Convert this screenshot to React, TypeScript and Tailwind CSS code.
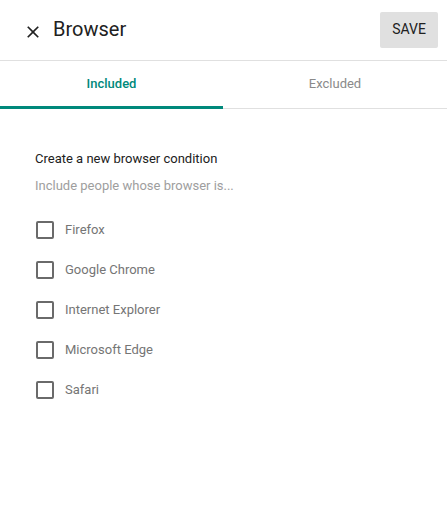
import React from "react";

const items = ["Firefox", "Google Chrome", "Internet Explorer", "Microsoft Edge", "Safari"];

export default function App() {
  return (
    <div className="w-[447px] h-[526px] bg-white text-[#212121]" style={{ fontFamily: "Roboto, 'Noto Sans', sans-serif" }}>
      <div className="h-[61px] border-b border-[#e0e0e0] flex items-center pl-[23px] pr-[9px]">
        <svg width="20" height="20" viewBox="0 0 24 24" className="shrink-0 mt-[3px]">
          <path d="M19 6.41L17.59 5 12 10.59 6.41 5 5 6.41 10.59 12 5 17.59 6.41 19 12 13.41 17.59 19 19 17.59 13.41 12z" fill="#212121" />
        </svg>
        <div className="ml-[10px] text-[20px] leading-none text-[#212121] mt-[-2px]">Browser</div>
        <div className="flex-1" />
        <div className="w-[58px] h-[36px] bg-[#e0e0e0] rounded-[2px] flex items-center justify-center text-[14px] font-normal text-[#212121] mt-[-1px]">SAVE</div>
      </div>
      <div className="flex h-[48px] border-b border-[#e0e0e0]">
        <div className="w-[223px] flex items-center justify-center text-[13px] font-medium text-[#00897b] border-b-[3px] border-[#00897b] mb-[-1px] pt-[1px]">Included</div>
        <div className="flex-1 flex items-center justify-center text-[13px] text-[#8a8a8a] pb-[1px]">Excluded</div>
      </div>
      <div className="pl-[35px] pt-[43px]">
        <div className="text-[13px] text-[#212121] leading-[14px]">Create a new browser condition</div>
        <div className="text-[13px] text-[#9e9e9e] leading-[14px] mt-[13px]">Include people whose browser is...</div>
        <div className="mt-[17px] flex flex-col">
          {items.map((it) => (
            <div key={it} className="h-[40px] flex items-center">
              <div className="w-[18px] h-[18px] border-2 border-[#6a6a6a] rounded-[2px] ml-[1px] shrink-0" />
              <div className="ml-[11px] text-[13px] text-[#757575]">{it}</div>
            </div>
          ))}
        </div>
      </div>
    </div>
  );
}
